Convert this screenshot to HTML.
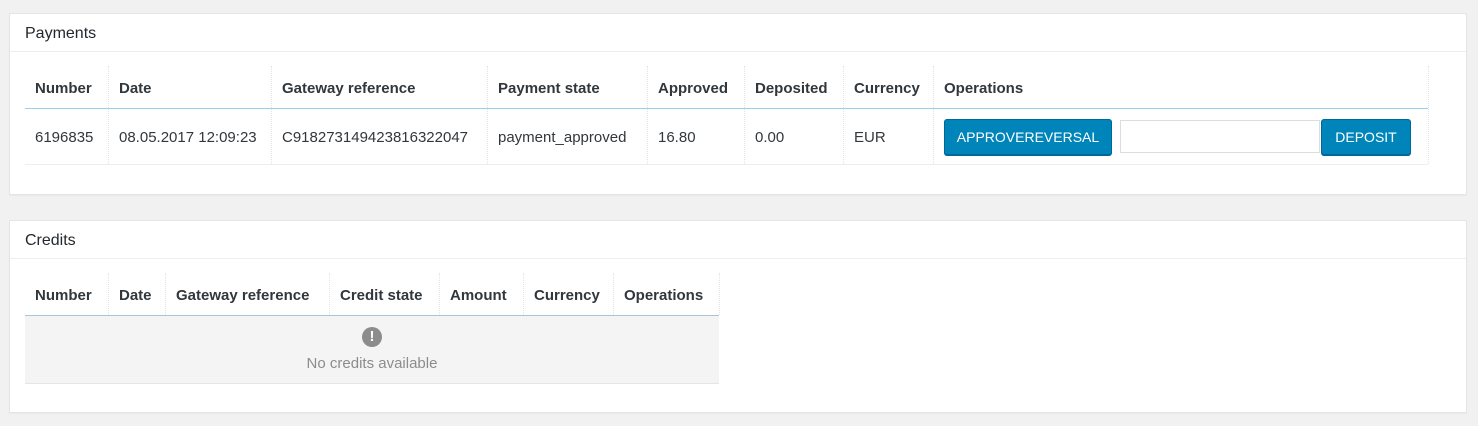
<!DOCTYPE html>
<html><head><style>
body{margin:0;width:1478px;height:426px;background:#f1f1f1;font-family:"Liberation Sans",sans-serif;font-size:15px;color:#32373c;position:relative;overflow:hidden}
.p{position:absolute;background:#fff;border:1px solid #e5e5e5;box-shadow:0 1px 1px rgba(0,0,0,.04)}
.t{position:absolute;font-size:16px;color:#23282d}
.hl{position:absolute;height:1px;background:#eee}
.c{position:absolute;white-space:nowrap}
.b{font-weight:bold}
.v{position:absolute;width:0;border-left:1px dotted #e4e4e4}
.btn{position:absolute;background:#0085ba;border:1px solid #006799;border-radius:3px;color:#fff;font-size:14px;text-align:center;box-shadow:0 1px 0 #006799}
</style></head><body>
<div class="p" style="left:9px;top:13px;width:1456px;height:180px"></div>
<div class="hl" style="left:10px;top:51px;width:1456px"></div>
<div class="t" style="left:25px;top:25px">Payments</div>
<div class="v" style="left:108px;top:66px;height:98px"></div>
<div class="v" style="left:271px;top:66px;height:98px"></div>
<div class="v" style="left:487px;top:66px;height:98px"></div>
<div class="v" style="left:647px;top:66px;height:98px"></div>
<div class="v" style="left:744px;top:66px;height:98px"></div>
<div class="v" style="left:843px;top:66px;height:98px"></div>
<div class="v" style="left:933px;top:66px;height:98px"></div>
<div class="v" style="left:1428px;top:66px;height:98px"></div>
<div style="position:absolute;left:25px;top:108px;width:1403px;height:1px;background:#9ccfed"></div>
<div class="hl" style="left:25px;top:164px;width:1403px"></div>
<div class="c b" style="left:35px;top:80px">Number</div>
<div class="c b" style="left:119px;top:80px">Date</div>
<div class="c b" style="left:282px;top:80px">Gateway reference</div>
<div class="c b" style="left:498px;top:80px">Payment state</div>
<div class="c b" style="left:658px;top:80px">Approved</div>
<div class="c b" style="left:755px;top:80px">Deposited</div>
<div class="c b" style="left:854px;top:80px">Currency</div>
<div class="c b" style="left:944px;top:80px">Operations</div>
<div class="c" style="left:35px;top:129px">6196835</div>
<div class="c" style="left:119px;top:129px">08.05.2017 12:09:23</div>
<div class="c" style="left:282px;top:129px">C918273149423816322047</div>
<div class="c" style="left:498px;top:129px">payment_approved</div>
<div class="c" style="left:658px;top:129px">16.80</div>
<div class="c" style="left:755px;top:129px">0.00</div>
<div class="c" style="left:854px;top:129px">EUR</div>
<div class="btn" style="left:944px;top:119px;width:166px;height:34px;line-height:35px">APPROVEREVERSAL</div>
<div style="position:absolute;left:1120px;top:120px;width:198px;height:31px;border:1px solid #ddd;background:#fff"></div>
<div class="btn" style="left:1321px;top:119px;width:88px;height:34px;line-height:35px">DEPOSIT</div>

<div class="p" style="left:9px;top:220px;width:1456px;height:191px"></div>
<div class="hl" style="left:10px;top:258px;width:1456px"></div>
<div class="t" style="left:25px;top:232px">Credits</div>
<div class="v" style="left:108px;top:273px;height:42px"></div>
<div class="v" style="left:165px;top:273px;height:42px"></div>
<div class="v" style="left:329px;top:273px;height:42px"></div>
<div class="v" style="left:439px;top:273px;height:42px"></div>
<div class="v" style="left:523px;top:273px;height:42px"></div>
<div class="v" style="left:613px;top:273px;height:42px"></div>
<div class="v" style="left:719px;top:273px;height:42px"></div>
<div style="position:absolute;left:25px;top:316px;width:694px;height:67px;background:#f4f4f4;border-bottom:1px solid #e5e5e5"></div>
<div style="position:absolute;left:25px;top:315px;width:694px;height:1px;background:#a9c5d6"></div>
<div class="c b" style="left:35px;top:287px">Number</div>
<div class="c b" style="left:119px;top:287px">Date</div>
<div class="c b" style="left:176px;top:287px">Gateway reference</div>
<div class="c b" style="left:340px;top:287px">Credit state</div>
<div class="c b" style="left:450px;top:287px">Amount</div>
<div class="c b" style="left:534px;top:287px">Currency</div>
<div class="c b" style="left:624px;top:287px">Operations</div>
<div style="position:absolute;left:362px;top:327px;width:20px;height:20px;border-radius:50%;background:#8c8c8c;color:#fff;font-weight:bold;font-size:15px;text-align:center;line-height:20px">!</div>
<div class="c" style="left:25px;width:694px;text-align:center;top:355px;color:#8c8c8c">No credits available</div>
</body></html>
